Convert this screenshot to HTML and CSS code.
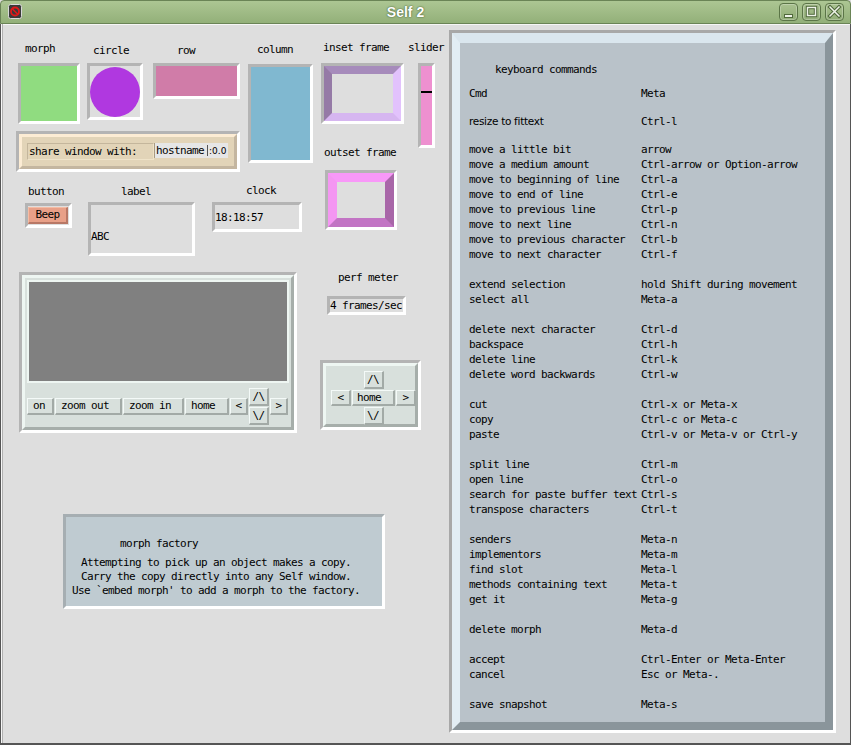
FILE: index.html
```html
<!DOCTYPE html>
<html>
<head>
<meta charset="utf-8">
<title>Self 2</title>
<link rel="stylesheet" href="styles.css">
</head>
<body>
<div class="win">
  <div class="titlebar">
    <svg class="app-icon" width="14" height="15" viewBox="0 0 14 15">
      <rect x="0.5" y="0.5" width="13" height="14" rx="2" fill="#3a3a3a" stroke="#d8d8d8"/>
      <circle cx="7" cy="7.5" r="4" fill="none" stroke="#e01818" stroke-width="1.8"/>
      <line x1="4.3" y1="4.8" x2="9.7" y2="10.2" stroke="#e01818" stroke-width="1.6"/>
    </svg>
    <div class="title">Self 2</div>
    <div class="wbtns">
      <div class="wbtn"><svg width="17" height="16" viewBox="0 0 17 16"><rect x="4.5" y="10.5" width="8" height="3" fill="#eef3e8" stroke="#50693c"/></svg></div>
      <div class="wbtn"><svg width="17" height="16" viewBox="0 0 17 16"><rect x="4.5" y="3.5" width="8" height="8" fill="none" stroke="#50693c" stroke-width="3.4"/><rect x="4.5" y="3.5" width="8" height="8" fill="none" stroke="#eef3e8" stroke-width="1.4"/></svg></div>
      <div class="wbtn"><svg width="17" height="16" viewBox="0 0 17 16"><path d="M4 3 L13 12 M13 3 L4 12" stroke="#50693c" stroke-width="3.6" stroke-linecap="square"/><path d="M4 3 L13 12 M13 3 L4 12" stroke="#eef3e8" stroke-width="1.5" stroke-linecap="square"/></svg></div>
    </div>
  </div>
  <div class="client">
    <div class="world">
      <div class="lbl l-morph">morph</div>
      <div class="lbl l-circle">circle</div>
      <div class="lbl l-row">row</div>
      <div class="lbl l-column">column</div>
      <div class="lbl l-inset">inset frame</div>
      <div class="lbl l-slider">slider</div>
      <div class="lbl l-outset">outset frame</div>
      <div class="lbl l-button">button</div>
      <div class="lbl l-label">label</div>
      <div class="lbl l-clock">clock</div>
      <div class="lbl l-perf">perf meter</div>

      <div class="m m-morph"><div class="fill green"></div></div>
      <div class="m m-circle"><div class="dot"></div></div>
      <div class="m m-row"><div class="fill pink"></div></div>
      <div class="m m-column"><div class="fill blue"></div></div>
      <div class="m m-inset"><div class="bevel-in"></div></div>
      <div class="m m-slider"><div class="slider-track"><div class="slider-knob"></div></div></div>
      <div class="m m-outset"><div class="bevel-out"></div></div>

      <div class="m m-share">
        <div class="share-in">
          <div class="share-lbl">share window with:</div>
          <div class="share-host">hostname<span class="caret"></span><span class="disp">:0.0</span></div>
        </div>
      </div>

      <div class="m m-button"><div class="beep">Beep</div></div>
      <div class="m m-label"><div class="label-text">ABC</div></div>
      <div class="m m-clock"><div class="clock-text">18:18:57</div></div>

      <div class="m m-scope">
        <div class="scope-in">
          <div class="screen"></div>
          <div class="ctrls">
            <div class="btn w-on">on</div>
            <div class="btn w-zo">zoom out</div>
            <div class="btn w-zi">zoom in</div>
            <div class="btn w-home">home</div>
            <div class="btn arr w-lr">&lt;</div>
            <div class="updown">
              <div class="btn arr w-ud up">/\</div>
              <div class="btn arr w-ud down">\/</div>
            </div>
            <div class="btn arr w-lr">&gt;</div>
          </div>
        </div>
      </div>

      <div class="m m-perf"><div class="perf-text">4 frames/sec</div></div>

      <div class="m m-nav">
        <div class="nav-in">
          <div class="btn arr n-up">/\</div>
          <div class="btn arr n-left">&lt;</div>
          <div class="btn n-home">home</div>
          <div class="btn arr n-right">&gt;</div>
          <div class="btn arr n-down">\/</div>
        </div>
      </div>

      <div class="m m-factory">
        <div class="factory-in">
          <div class="factory-title">morph factory</div>
          <div class="factory-line">Attempting to pick up an object makes a copy.</div>
          <div class="factory-line">Carry the copy directly into any Self window.</div>
          <div class="factory-line">Use `embed morph' to add a morph to the factory.</div>
        </div>
      </div>
    </div>

    <div class="keys">
      <div class="keys-in">
        <div class="keys-title">keyboard commands</div>
        <div class="grp first"><span>Cmd</span><span>Meta</span></div>
        <div class="grp tight"><span class="prop">resize to fittext</span><span>Ctrl-l</span></div>
        <div class="grp tight">
          <span>move a little bit</span><span>arrow</span>
          <span>move a medium amount</span><span>Ctrl-arrow or Option-arrow</span>
          <span>move to beginning of line</span><span>Ctrl-a</span>
          <span>move to end of line</span><span>Ctrl-e</span>
          <span>move to previous line</span><span>Ctrl-p</span>
          <span>move to next line</span><span>Ctrl-n</span>
          <span>move to previous character</span><span>Ctrl-b</span>
          <span>move to next character</span><span>Ctrl-f</span>
        </div>
        <div class="grp">
          <span>extend selection</span><span>hold Shift during movement</span>
          <span>select all</span><span>Meta-a</span>
        </div>
        <div class="grp">
          <span>delete next character</span><span>Ctrl-d</span>
          <span>backspace</span><span>Ctrl-h</span>
          <span>delete line</span><span>Ctrl-k</span>
          <span>delete word backwards</span><span>Ctrl-w</span>
        </div>
        <div class="grp">
          <span>cut</span><span>Ctrl-x or Meta-x</span>
          <span>copy</span><span>Ctrl-c or Meta-c</span>
          <span>paste</span><span>Ctrl-v or Meta-v or Ctrl-y</span>
        </div>
        <div class="grp">
          <span>split line</span><span>Ctrl-m</span>
          <span>open line</span><span>Ctrl-o</span>
          <span>search for paste buffer text</span><span>Ctrl-s</span>
          <span>transpose characters</span><span>Ctrl-t</span>
        </div>
        <div class="grp">
          <span>senders</span><span>Meta-n</span>
          <span>implementors</span><span>Meta-m</span>
          <span>find slot</span><span>Meta-l</span>
          <span>methods containing text</span><span>Meta-t</span>
          <span>get it</span><span>Meta-g</span>
        </div>
        <div class="grp">
          <span>delete morph</span><span>Meta-d</span>
        </div>
        <div class="grp">
          <span>accept</span><span>Ctrl-Enter or Meta-Enter</span>
          <span>cancel</span><span>Esc or Meta-.</span>
        </div>
        <div class="grp">
          <span>save snapshot</span><span>Meta-s</span>
        </div>
      </div>
    </div>
  </div>
</div>
</body>
</html>
```

FILE: styles.css
```css
html, body {
  margin: 0;
  padding: 0;
  background: #dedede;
}
.win {
  width: 851px;
  height: 745px;
  overflow: hidden;
  font-family: "DejaVu Sans Mono", "Liberation Mono", monospace;
  font-size: 11px;
  letter-spacing: -0.62px;
  color: #000;
}

/* ---------- title bar ---------- */
.titlebar {
  box-sizing: border-box;
  height: 24px;
  display: flex;
  align-items: flex-start;
  background: linear-gradient(#acc693, #93b079);
  border: 1px solid #6a8456;
  border-radius: 4px 4px 0 0;
}
.app-icon {
  flex: none;
  margin: 3px 0 0 7px;
}
.title {
  flex: 1;
  text-align: center;
  padding-left: 10px;
  font-family: "Liberation Sans", Arial, sans-serif;
  font-weight: bold;
  font-size: 14px;
  letter-spacing: 0;
  line-height: 22px;
  color: #fff;
  text-shadow: 0 0 2px #4f6a3b, 0 0 1px #4f6a3b;
}
.wbtns {
  flex: none;
  display: flex;
  gap: 4px;
  margin: 2px 6px 0 0;
}
.wbtn {
  box-sizing: border-box;
  width: 19px;
  height: 18px;
  border: 1px solid #5b7547;
  border-radius: 4px;
  background: linear-gradient(#a9c290, #91ad77);
  box-shadow: inset 0 0 0 1px rgba(255, 255, 255, 0.25);
}
.wbtn svg {
  display: block;
}

/* ---------- client area ---------- */
.client {
  box-sizing: border-box;
  height: 721px;
  display: flex;
  background: #dedede;
  border-left: 1px solid #555;
  border-right: 1px solid #555;
  border-bottom: 2px solid #555;
  padding-left: 2px;
  box-shadow: inset 1px 0 0 #f6f6f6, inset 2px 0 0 #b0b0b0, inset 0 1px 0 #f6f6f6;
}
.world {
  position: relative;
  flex: none;
  width: 446px;
  height: 100%;
}

/* labels on the world canvas */
.lbl {
  position: absolute;
  line-height: 15px;
  white-space: pre;
}
.l-morph  { left: 22px;  top: 16.5px; }
.l-circle { left: 90px;  top: 18.5px; }
.l-row    { left: 174px; top: 18.5px; }
.l-column { left: 254px; top: 17.5px; }
.l-inset  { left: 320px; top: 16px; }
.l-slider { left: 405px; top: 16px; }
.l-outset { left: 321px; top: 120.5px; }
.l-button { left: 25px;  top: 159.5px; }
.l-label  { left: 118px; top: 160px; }
.l-clock  { left: 243px; top: 158.5px; }
.l-perf   { left: 335px; top: 246px; }

/* morphs: each sits in an inset well */
.m {
  position: absolute;
  box-sizing: border-box;
  border: 3px solid;
  border-color: #b4b4b4 #fff #fff #b4b4b4;
}
.m-morph   { left: 15px;  top: 39px;  width: 62px;  height: 61px; }
.m-circle  { left: 84px;  top: 39px;  width: 56px;  height: 57px; }
.m-row     { left: 150px; top: 39px;  width: 87px;  height: 36px; }
.m-column  { left: 245px; top: 40px;  width: 65px;  height: 99px; }
.m-inset   { left: 318px; top: 39px;  width: 83px;  height: 61px; }
.m-slider  { left: 415px; top: 39px;  width: 17px;  height: 85px; }
.m-outset  { left: 322px; top: 146px; width: 72px;  height: 60px; }
.m-share   { left: 13px;  top: 107px; width: 224px; height: 41px; }
.m-button  { left: 22px;  top: 179px; width: 47px;  height: 25px; }
.m-label   { left: 85px;  top: 178px; width: 107px; height: 54px; }
.m-clock   { left: 209px; top: 178px; width: 90px;  height: 30px; }
.m-scope   { left: 16px;  top: 248px; width: 278px; height: 161px; }
.m-perf    { left: 324px; top: 272px; width: 79px;  height: 19px; }
.m-nav     { left: 317px; top: 336px; width: 101px; height: 70px; }
.m-factory { left: 60px;  top: 490px; width: 322px; height: 95px; }

.fill { height: 100%; }
.green { background: #90dc80; }
.pink  { background: #d07ca8; }
.blue  { background: #80b8d0; }

.m-circle {
  display: flex;
  align-items: center;
  justify-content: center;
}
.dot {
  width: 50px;
  height: 50px;
  border-radius: 50%;
  background: #b038e0;
}

.bevel-in {
  box-sizing: border-box;
  height: 100%;
  border: 8px solid;
  border-color: #a68bbb #e2c2fc #d6b6f0 #957aa6;
  background: #dedede;
}
.bevel-out {
  box-sizing: border-box;
  height: 100%;
  border: 9px solid;
  border-color: #f898f8 #a866a8 #c274c4 #f496f2;
  background: #dedede;
}

.slider-track {
  height: 100%;
  background: #ee90d0;
  padding-top: 25px;
  box-sizing: border-box;
}
.slider-knob {
  height: 2px;
  background: #000;
}

/* share window */
.share-in {
  box-sizing: border-box;
  height: 100%;
  border: 3px solid;
  border-color: #fcecd4 #c4b6a0 #c4b6a0 #fcecd4;
  background: #e2d4b8;
  display: flex;
  align-items: flex-start;
  padding: 6px 0 0 5px;
}
.share-lbl {
  box-sizing: border-box;
  width: 127px;
  height: 17px;
  border: 1px solid;
  border-color: #c4b69c #efe3c9 #efe3c9 #c4b69c;
  padding-left: 1px;
  line-height: 15px;
  white-space: pre;
}
.share-host {
  box-sizing: border-box;
  width: 74px;
  height: 15px;
  background: #e6e6e6;
  border-left: 1px solid #a89a82;
  padding-left: 1px;
  line-height: 14px;
  white-space: pre;
  display: flex;
  align-items: center;
}
.caret {
  width: 1px;
  height: 11px;
  background: #555;
  margin: 0 1px 0 3px;
}
.disp {
  font-family: "DejaVu Sans", sans-serif;
  font-size: 9px;
  letter-spacing: 0;
}

/* button */
.beep {
  box-sizing: border-box;
  width: 40px;
  height: 17px;
  margin-top: 1px;
  background: #e8a088;
  border: 1px solid;
  border-color: #f4bca4 #b87866 #b87866 #f4bca4;
  border-width: 1px 2px 2px 1px;
  text-align: center;
  line-height: 14px;
}

.label-text {
  padding-top: 24px;
  line-height: 15px;
}
.clock-text {
  padding-top: 5px;
  line-height: 15px;
}
.perf-text {
  line-height: 13px;
  white-space: pre;
}

/* scope (zoomable view) */
.scope-in {
  box-sizing: border-box;
  height: 100%;
  border: 3px solid;
  border-color: #eef6f2 #a6aeaa #a6aeaa #eef6f2;
  background: #d8e0dc;
  padding: 2px;
  display: flex;
  flex-direction: column;
}
.screen {
  box-sizing: border-box;
  height: 105px;
  border: 2px solid #eef6f2;
  background: #808080;
}
.ctrls {
  display: flex;
  align-items: center;
  gap: 1px;
  margin-top: 5px;
}
.btn {
  box-sizing: border-box;
  height: 17px;
  background: #d8e0dc;
  border: 1px solid;
  border-color: #f4faf8 #a2aaa6 #a2aaa6 #f4faf8;
  border-width: 1px 2px 2px 1px;
  line-height: 14px;
  padding-left: 5px;
  white-space: pre;
}
.arr {
  padding-left: 0;
  text-align: center;
}
.w-on   { width: 27px; }
.w-zo   { width: 67px; }
.w-zi   { width: 61px; }
.w-home { width: 44px; }
.w-lr   { width: 18px; }
.updown {
  display: flex;
  flex-direction: column;
  gap: 1px;
}
.w-ud {
  width: 20px;
  height: 18px;
  line-height: 15px;
}

/* nav */
.nav-in {
  box-sizing: border-box;
  height: 100%;
  border: 3px solid;
  border-color: #eef6f2 #a6aeaa #a6aeaa #eef6f2;
  background: #d8e0dc;
  padding: 5px 0 0 5px;
  display: grid;
  grid-template-columns: 20px 43px 20px;
  grid-template-rows: 18px 16px 18px;
  gap: 1px;
  align-content: start;
}
.nav-in .btn { height: auto; }
.n-up    { grid-column: 2; grid-row: 1; justify-self: center; width: 20px; line-height: 15px; }
.n-left  { grid-column: 1; grid-row: 2; line-height: 13px; }
.n-home  { grid-column: 2; grid-row: 2; line-height: 13px; padding-left: 4px; }
.n-right { grid-column: 3; grid-row: 2; line-height: 13px; }
.n-down  { grid-column: 2; grid-row: 3; justify-self: center; width: 20px; line-height: 15px; }

/* factory */
.m-factory {
  border-color: #a6aeb2 #fff #fff #a6aeb2;
}
.factory-in {
  box-sizing: border-box;
  height: 100%;
  background: #bfcbd1;
  padding: 19px 0 0 6px;
}
.factory-title {
  line-height: 15px;
  margin-left: 48px;
  margin-bottom: 5px;
}
.factory-line {
  width: 288px;
  text-align: center;
  line-height: 14px;
  white-space: pre;
}

/* keyboard commands panel */
.keys {
  flex: none;
  box-sizing: border-box;
  width: 387px;
  height: 703px;
  margin-top: 6px;
  border: 3px solid;
  border-color: #a8a8a8 #fff #fff #a8a8a8;
}
.keys-in {
  box-sizing: border-box;
  height: 100%;
  border-style: solid;
  border-width: 10px 8px 8px 8px;
  border-color: #dae6ee #8a959b #8a959b #e2edf4;
  background: #b9c2c9;
  padding: 18.5px 0 0 9px;
}
.keys-title {
  line-height: 15px;
  margin-left: 26px;
}
.grp {
  display: grid;
  grid-template-columns: 172px auto;
  line-height: 15px;
  margin-top: 15px;
  white-space: pre;
}
.grp.first { margin-top: 9.5px; }
.grp.tight { margin-top: 13px; }
.prop {
  font-family: "DejaVu Sans", sans-serif;
  font-size: 10.5px;
  letter-spacing: -0.3px;
}
```
